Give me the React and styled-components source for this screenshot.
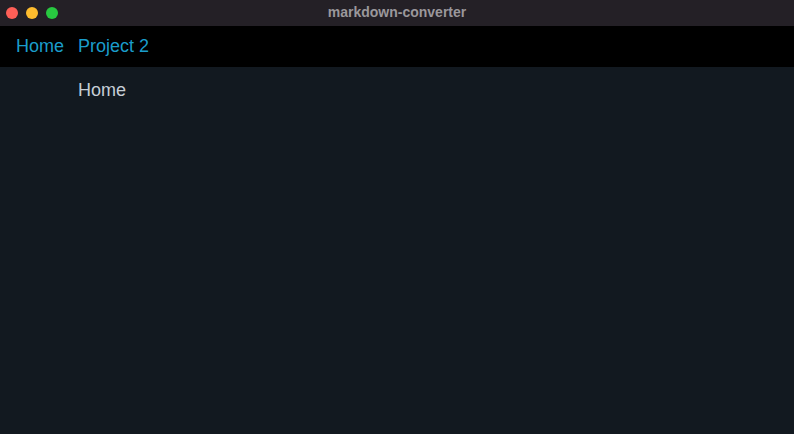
import React from "react";
import styled, { createGlobalStyle } from "styled-components";

const Global = createGlobalStyle`
  html, body { margin: 0; padding: 0; background: #121920; }
  body { font-family: "Helvetica Neue", "Liberation Sans", Arial, sans-serif; }
  #root { width: 794px; height: 434px; overflow: hidden; }
`;

const Window = styled.div`
  width: 794px;
  height: 434px;
  display: flex;
  flex-direction: column;
  background: #121920;
`;

const TitleBar = styled.div`
  height: 26px;
  flex: none;
  background: #242026;
  display: flex;
  align-items: center;
  position: relative;
  padding-left: 6px;
  gap: 8px;
`;

const Light = styled.span`
  width: 12px;
  height: 12px;
  border-radius: 50%;
  background: ${(p) => p.$color};
`;

const Title = styled.div`
  position: absolute;
  left: 0;
  right: 0;
  top: 0;
  height: 26px;
  line-height: 24px;
  text-align: center;
  font-size: 14px;
  font-weight: 700;
  color: #9a979b;
  pointer-events: none;
`;

const Nav = styled.nav`
  height: 41px;
  flex: none;
  background: #000;
  display: flex;
  align-items: center;
  padding-left: 16px;
  gap: 14px;
`;

const NavLink = styled.a`
  font-size: 18px;
  color: #1a9dcb;
  text-decoration: none;
  font-family: "Liberation Sans", Arial, sans-serif;
`;

const Main = styled.main`
  flex: 1;
  padding: 13px 0 0 78px;
`;

const Heading = styled.div`
  font-size: 18px;
  color: #c6ced6;
  font-family: "Liberation Sans", Arial, sans-serif;
`;

export default function App() {
  return (
    <>
      <Global />
      <Window>
        <TitleBar>
          <Light $color="#fe5f57" />
          <Light $color="#febc2e" />
          <Light $color="#28c840" />
          <Title>markdown-converter</Title>
        </TitleBar>
        <Nav>
          <NavLink>Home</NavLink>
          <NavLink>Project 2</NavLink>
        </Nav>
        <Main>
          <Heading>Home</Heading>
        </Main>
      </Window>
    </>
  );
}
